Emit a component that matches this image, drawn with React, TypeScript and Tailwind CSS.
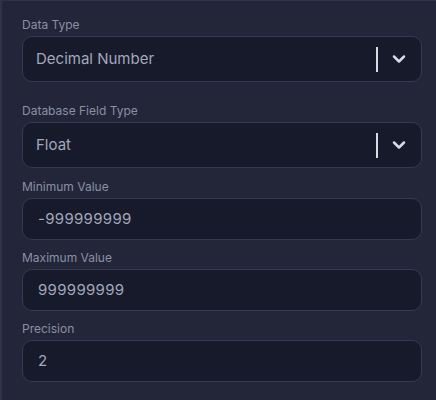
import { ChevronDown } from "lucide-react";

function Label({ children }: { children: string }) {
  return <div className="text-[12px] leading-[16px] text-[#8a8fa6] mb-[3px]">{children}</div>;
}

function Select({ value }: { value: string }) {
  return (
    <div className="h-[46px] rounded-[10px] border border-[#343a52] bg-[#161a2b] flex items-center pl-[13px] pr-[12px]">
      <span className="flex-1 text-[15px] text-[#a3a8bb]">{value}</span>
      <span className="w-[2px] h-[25px] bg-[#d9dbe3] mr-[11px]" />
      <ChevronDown size={20} strokeWidth={3} className="text-[#d9dbe3]" />
    </div>
  );
}

function Input({ value }: { value: string }) {
  return (
    <div className="h-[42px] rounded-[10px] border border-[#343a52] bg-[#161a2b] flex items-center pl-[15px]">
      <span className="text-[15px] text-[#a3a8bb] tracking-[0.3px]">{value}</span>
    </div>
  );
}

export default function App() {
  return (
    <div className="w-[436px] h-[400px] overflow-hidden bg-[#222638] border-l-[2px] border-t border-[#2e3347]" style={{ fontFamily: "Inter, 'Noto Sans', sans-serif" }}>
      <div className="pl-[20px] pr-[14px] pt-[16px]">
        <Label>Data Type</Label>
        <Select value="Decimal Number" />
        <div className="h-[21px]" />
        <Label>Database Field Type</Label>
        <Select value="Float" />
        <div className="h-[11px]" />
        <Label>Minimum Value</Label>
        <Input value="-999999999" />
        <div className="h-[10px]" />
        <Label>Maximum Value</Label>
        <Input value="999999999" />
        <div className="h-[10px]" />
        <Label>Precision</Label>
        <Input value="2" />
      </div>
    </div>
  );
}
